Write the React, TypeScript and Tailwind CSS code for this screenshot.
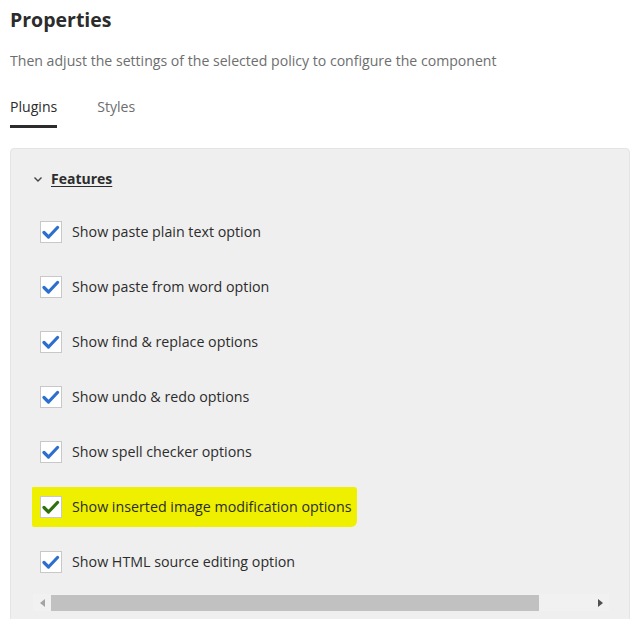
import React from 'react';

const OPTIONS = [
  'Show paste plain text option',
  'Show paste from word option',
  'Show find & replace options',
  'Show undo & redo options',
  'Show spell checker options',
  'Show inserted image modification options',
  'Show HTML source editing option',
];

function Check({ green }: { green?: boolean }) {
  return (
    <span className="w-[22px] h-[22px] bg-white border border-[#c8c8c8] flex items-center justify-center shrink-0">
      <svg width="18" height="14" viewBox="0 0 18 14">
        <path
          d="M2 7.5 L6.5 12 L15.5 2.5"
          fill="none"
          stroke={green ? '#2f6f12' : '#2d6fcc'}
          strokeWidth="3.2"
          strokeLinecap="round"
          strokeLinejoin="round"
        />
      </svg>
    </span>
  );
}

export default function App() {
  return (
    <div className="w-[640px] h-[619px] bg-white overflow-hidden text-[#323232]" style={{ fontFamily: '"Open Sans", sans-serif' }}>
      <div className="pl-[10px] pt-[6px]">
        <h1 className="text-[19.5px] font-bold leading-[28px] text-[#2c2c2c]">Properties</h1>
        <p className="mt-[17px] text-[14.1px] text-[#6e6e6e] leading-[20px]">
          Then adjust the settings of the selected policy to configure the component
        </p>

        {/* Tabs */}
        <div className="mt-[26px] flex gap-[40px] text-[14.1px]">
          <div className="flex flex-col">
            <span className="leading-[20px] text-[#2c2c2c]">Plugins</span>
            <span className="mt-[8px] h-[3px] bg-[#2c2c2c]" />
          </div>
          <span className="leading-[20px] text-[#6e6e6e]">Styles</span>
        </div>
      </div>

      {/* Panel */}
      <div className="ml-[10px] mt-[20px] w-[620px] h-[480px] bg-[#efefef] border border-[#e4e4e4] rounded-t-[4px] flex flex-col">
        <div className="pl-[22px] pt-[20px] flex items-center gap-[8px]">
          <svg width="10" height="8" viewBox="0 0 10 8">
            <path d="M1.5 2.5 L5 6 L8.5 2.5" fill="none" stroke="#444" strokeWidth="1.4" />
          </svg>
          <span className="text-[14px] font-bold underline underline-offset-2 text-[#2c2c2c] leading-[20px]">Features</span>
        </div>

        <div className="mt-[32px] flex flex-col gap-[33px] pl-[29px]">
          {OPTIONS.map((label, i) =>
            i === 5 ? (
              <div
                key={label}
                className="-ml-[8px] -my-[9px] w-fit flex items-center gap-[10px] bg-[#eef000] pl-[8px] pr-[6px] py-[9px] rounded-tl-[1px] rounded-tr-[3px] rounded-br-[6px] rounded-bl-[2px]"
              >
                <Check green />
                <span className="text-[14.25px] leading-[22px] text-[#2c2c2c]">{label}</span>
              </div>
            ) : (
              <div key={label} className="flex items-center gap-[10px]">
                <Check />
                <span className="text-[14.25px] leading-[22px] text-[#2c2c2c]">{label}</span>
              </div>
            )
          )}
        </div>

        {/* Horizontal scrollbar */}
        <div className="mt-[21px] ml-[22px] w-[576px] h-[17px] flex items-center bg-[#f1f1f1]">
          <span className="w-[18px] flex justify-center">
            <svg width="5" height="8" viewBox="0 0 5 8"><path d="M5 0 L0 4 L5 8 Z" fill="#a3a3a3" /></svg>
          </span>
          <span className="w-[488px] h-[16px] bg-[#c1c1c1]" />
          <span className="flex-1 flex justify-end pr-[6px]">
            <svg width="5" height="8" viewBox="0 0 5 8"><path d="M0 0 L5 4 L0 8 Z" fill="#505050" /></svg>
          </span>
        </div>
      </div>
    </div>
  );
}
